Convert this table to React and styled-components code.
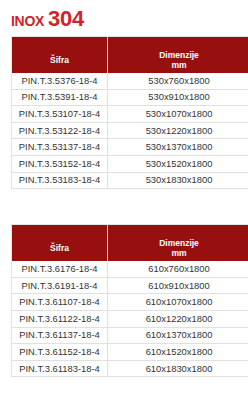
import React from "react";
import styled, { createGlobalStyle } from "styled-components";

const GlobalStyle = createGlobalStyle`
  html, body {
    margin: 0;
    padding: 0;
    overflow: hidden;
    background: #fff;
  }
  body {
    font-family: "Liberation Sans", Arial, sans-serif;
  }
`;

const Page = styled.div`
  width: 248px;
  height: 400px;
  padding: 8px 0 0 11px;
  box-sizing: border-box;
  overflow: hidden;
`;

const Title = styled.h2`
  margin: 0;
  color: #d2232a;
  font-weight: bold;
  line-height: 22px;
  height: 22px;
  font-size: 14px;
  letter-spacing: -0.3px;
  span {
    font-size: 22px;
    margin-left: 4px;
  }
`;

const Table = styled.table`
  width: 240px;
  border-collapse: collapse;
  border: 1px solid #e2e2e2;
  margin-top: ${(p) => p.$top}px;
  table-layout: fixed;
`;

const HeadCell = styled.th`
  background: #980f10;
  color: #fff;
  font-size: 8.5px;
  font-weight: bold;
  line-height: 10px;
  height: 36px;
  padding: 12px 0 2px;
  box-sizing: border-box;
  text-align: center;
  vertical-align: middle;
  border-right: 1px solid #d8d8d8;
  width: ${(p) => p.$w || "auto"};
`;

const Row = styled.tr`
  height: 16.6px;
`;

const Cell = styled.td`
  padding: 0;
  font-size: 9.4px;
  color: #333;
  text-align: center;
  border-bottom: 1px solid #e0e0e0;
  border-right: 1px solid #e0e0e0;
  line-height: 12px;
  white-space: nowrap;
`;

const inox53 = [
  ["PIN.T.3.5376-18-4", "530x760x1800"],
  ["PIN.T.3.5391-18-4", "530x910x1800"],
  ["PIN.T.3.53107-18-4", "530x1070x1800"],
  ["PIN.T.3.53122-18-4", "530x1220x1800"],
  ["PIN.T.3.53137-18-4", "530x1370x1800"],
  ["PIN.T.3.53152-18-4", "530x1520x1800"],
  ["PIN.T.3.53183-18-4", "530x1830x1800"],
];

const inox61 = [
  ["PIN.T.3.6176-18-4", "610x760x1800"],
  ["PIN.T.3.6191-18-4", "610x910x1800"],
  ["PIN.T.3.61107-18-4", "610x1070x1800"],
  ["PIN.T.3.61122-18-4", "610x1220x1800"],
  ["PIN.T.3.61137-18-4", "610x1370x1800"],
  ["PIN.T.3.61152-18-4", "610x1520x1800"],
  ["PIN.T.3.61183-18-4", "610x1830x1800"],
];

const SizeTable = ({ rows, top }) => (
  <Table $top={top}>
    <thead>
      <tr>
        <HeadCell $w="96px">Šifra</HeadCell>
        <HeadCell>
          Dimenzije
          <br />
          mm
        </HeadCell>
      </tr>
    </thead>
    <tbody>
      {rows.map(([code, dim]) => (
        <Row key={code}>
          <Cell>{code}</Cell>
          <Cell>{dim}</Cell>
        </Row>
      ))}
    </tbody>
  </Table>
);

export default function App() {
  return (
    <>
      <GlobalStyle />
      <Page>
        <Title>
          INOX<span>304</span>
        </Title>
        <SizeTable rows={inox53} top={6} />
        <SizeTable rows={inox61} top={35} />
      </Page>
    </>
  );
}
